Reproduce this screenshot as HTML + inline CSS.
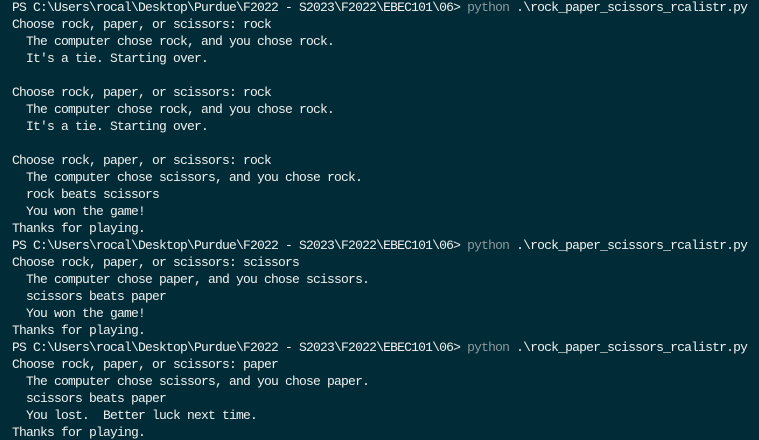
<!DOCTYPE html>
<html><head><style>
html,body{margin:0;padding:0;background:#012b36;width:759px;height:440px;overflow:hidden}
pre{margin:0;padding:0 0 0 12px;font-family:"Liberation Mono",monospace;font-size:13px;letter-spacing:-0.8px;line-height:17px;color:#eef0f0;position:relative;top:-1px}
.g{color:#8a9a9e}
</style></head><body><pre>PS C:\Users\rocal\Desktop\Purdue\F2022 - S2023\F2022\EBEC101\06&gt; <span class="g">python</span> .\rock_paper_scissors_rcalistr.py
Choose rock, paper, or scissors: rock
  The computer chose rock, and you chose rock.
  It's a tie. Starting over.

Choose rock, paper, or scissors: rock
  The computer chose rock, and you chose rock.
  It's a tie. Starting over.

Choose rock, paper, or scissors: rock
  The computer chose scissors, and you chose rock.
  rock beats scissors
  You won the game!
Thanks for playing.
PS C:\Users\rocal\Desktop\Purdue\F2022 - S2023\F2022\EBEC101\06&gt; <span class="g">python</span> .\rock_paper_scissors_rcalistr.py
Choose rock, paper, or scissors: scissors
  The computer chose paper, and you chose scissors.
  scissors beats paper
  You won the game!
Thanks for playing.
PS C:\Users\rocal\Desktop\Purdue\F2022 - S2023\F2022\EBEC101\06&gt; <span class="g">python</span> .\rock_paper_scissors_rcalistr.py
Choose rock, paper, or scissors: paper
  The computer chose scissors, and you chose paper.
  scissors beats paper
  You lost.  Better luck next time.
Thanks for playing.</pre></body></html>
